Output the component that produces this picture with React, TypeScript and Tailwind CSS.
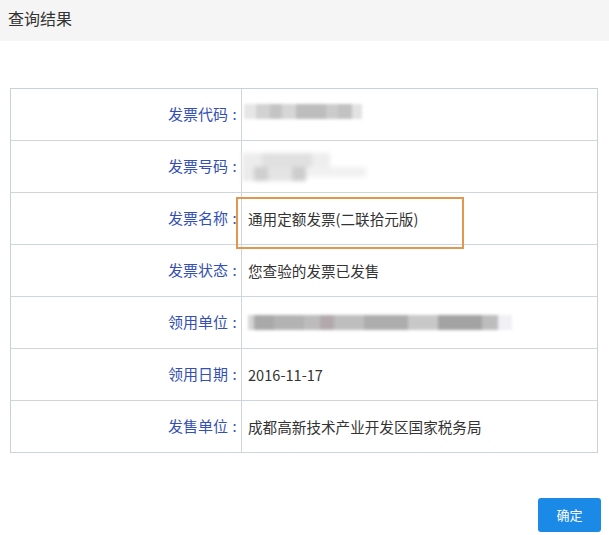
import React from 'react'

const font = { fontFamily: '"Microsoft YaHei", "Noto Sans CJK SC", "Noto Sans", sans-serif' }

function Blur({ blocks }: { blocks: { w: number; c: string }[] }) {
  return (
    <div className="flex blur-[1.5px]">
      {blocks.map((b, i) => (
        <div key={i} className="h-[15px]" style={{ width: b.w, background: b.c }} />
      ))}
    </div>
  )
}

const rows: { label: string; value: React.ReactNode }[] = [
  {
    label: '发票代码',
    value: (
      <div className="-ml-[4px] mt-[-6px]">
        <Blur
          blocks={[
            { w: 12, c: '#e6e6e6' },
            { w: 14, c: '#d2d2d2' },
            { w: 12, c: '#c4c4c4' },
            { w: 14, c: '#d6d6d6' },
            { w: 30, c: '#bdbdbd' },
            { w: 12, c: '#cbcbcb' },
            { w: 14, c: '#c2c2c2' },
            { w: 10, c: '#e2e2e2' },
          ]}
        />
      </div>
    ),
  },
  {
    label: '发票号码',
    value: (
      <div className="-ml-[6px] flex flex-col blur-[2px]">
        <div className="flex">
          <div className="h-[14px] w-[20px] bg-[#ececec]" />
          <div className="h-[14px] w-[50px] bg-[#e0e0e0]" />
          <div className="h-[14px] w-[18px] bg-[#eeeeee]" />
        </div>
        <div className="flex">
          <div className="h-[14px] w-[12px] bg-[#ebebeb]" />
          <div className="h-[14px] w-[14px] bg-[#cfcfcf]" />
          <div className="h-[14px] w-[24px] bg-[#e4e4e4]" />
          <div className="h-[14px] w-[14px] bg-[#cdcdcd]" />
          <div className="h-[10px] w-[60px] bg-[#f1f1f1]" />
        </div>
      </div>
    ),
  },
  { label: '发票名称', value: '通用定额发票(二联拾元版)' },
  { label: '发票状态', value: '您查验的发票已发售' },
  {
    label: '领用单位',
    value: (
      <Blur
        blocks={[
          { w: 6, c: '#d6d6d6' },
          { w: 20, c: '#a9a9a9' },
          { w: 30, c: '#b3b3b3' },
          { w: 16, c: '#bcbcbc' },
          { w: 14, c: '#b3a9ad' },
          { w: 30, c: '#bebebe' },
          { w: 44, c: '#adadad' },
          { w: 30, c: '#c8c8c8' },
          { w: 44, c: '#a3a3a3' },
          { w: 16, c: '#bdbdbd' },
          { w: 14, c: '#f0f0f5' },
        ]}
      />
    ),
  },
  { label: '领用日期', value: '2016-11-17' },
  { label: '发售单位', value: '成都高新技术产业开发区国家税务局' },
]

export default function App() {
  return (
    <div className="h-[535px] w-[609px] overflow-hidden bg-white" style={font}>
      <div className="flex h-[41px] items-center bg-[#f5f5f5] pb-[5px] pl-[8px] text-[16px] text-[#333]">
        查询结果
      </div>

      <div className="relative mx-[10px] mt-[47px] mr-[11px] border-x border-t border-[#c9d0d8]">
        {rows.map((r) => (
          <div
            key={r.label}
            className="grid h-[52px] grid-cols-[231px_1fr] border-b border-[#cfd5dc]"
          >
            <div className="flex items-center justify-end border-r border-[#cfd5dc] text-[15px] text-[#3450b4]">
              {r.label}
              <span className="w-[13px] text-center">:</span>
            </div>
            <div className="flex items-center pl-[6px] text-[14.6px] text-[#333]">{r.value}</div>
          </div>
        ))}
        <div className="pointer-events-none absolute left-[225px] top-[108px] h-[52px] w-[228px] border-2 border-[#e2974f]" />
      </div>

      <div className="mt-[45px] flex justify-end pr-[8px]">
        <button className="h-[34px] w-[63px] rounded-[3px] bg-[#1b8ae6] text-[13px] text-white">
          确定
        </button>
      </div>
    </div>
  )
}
